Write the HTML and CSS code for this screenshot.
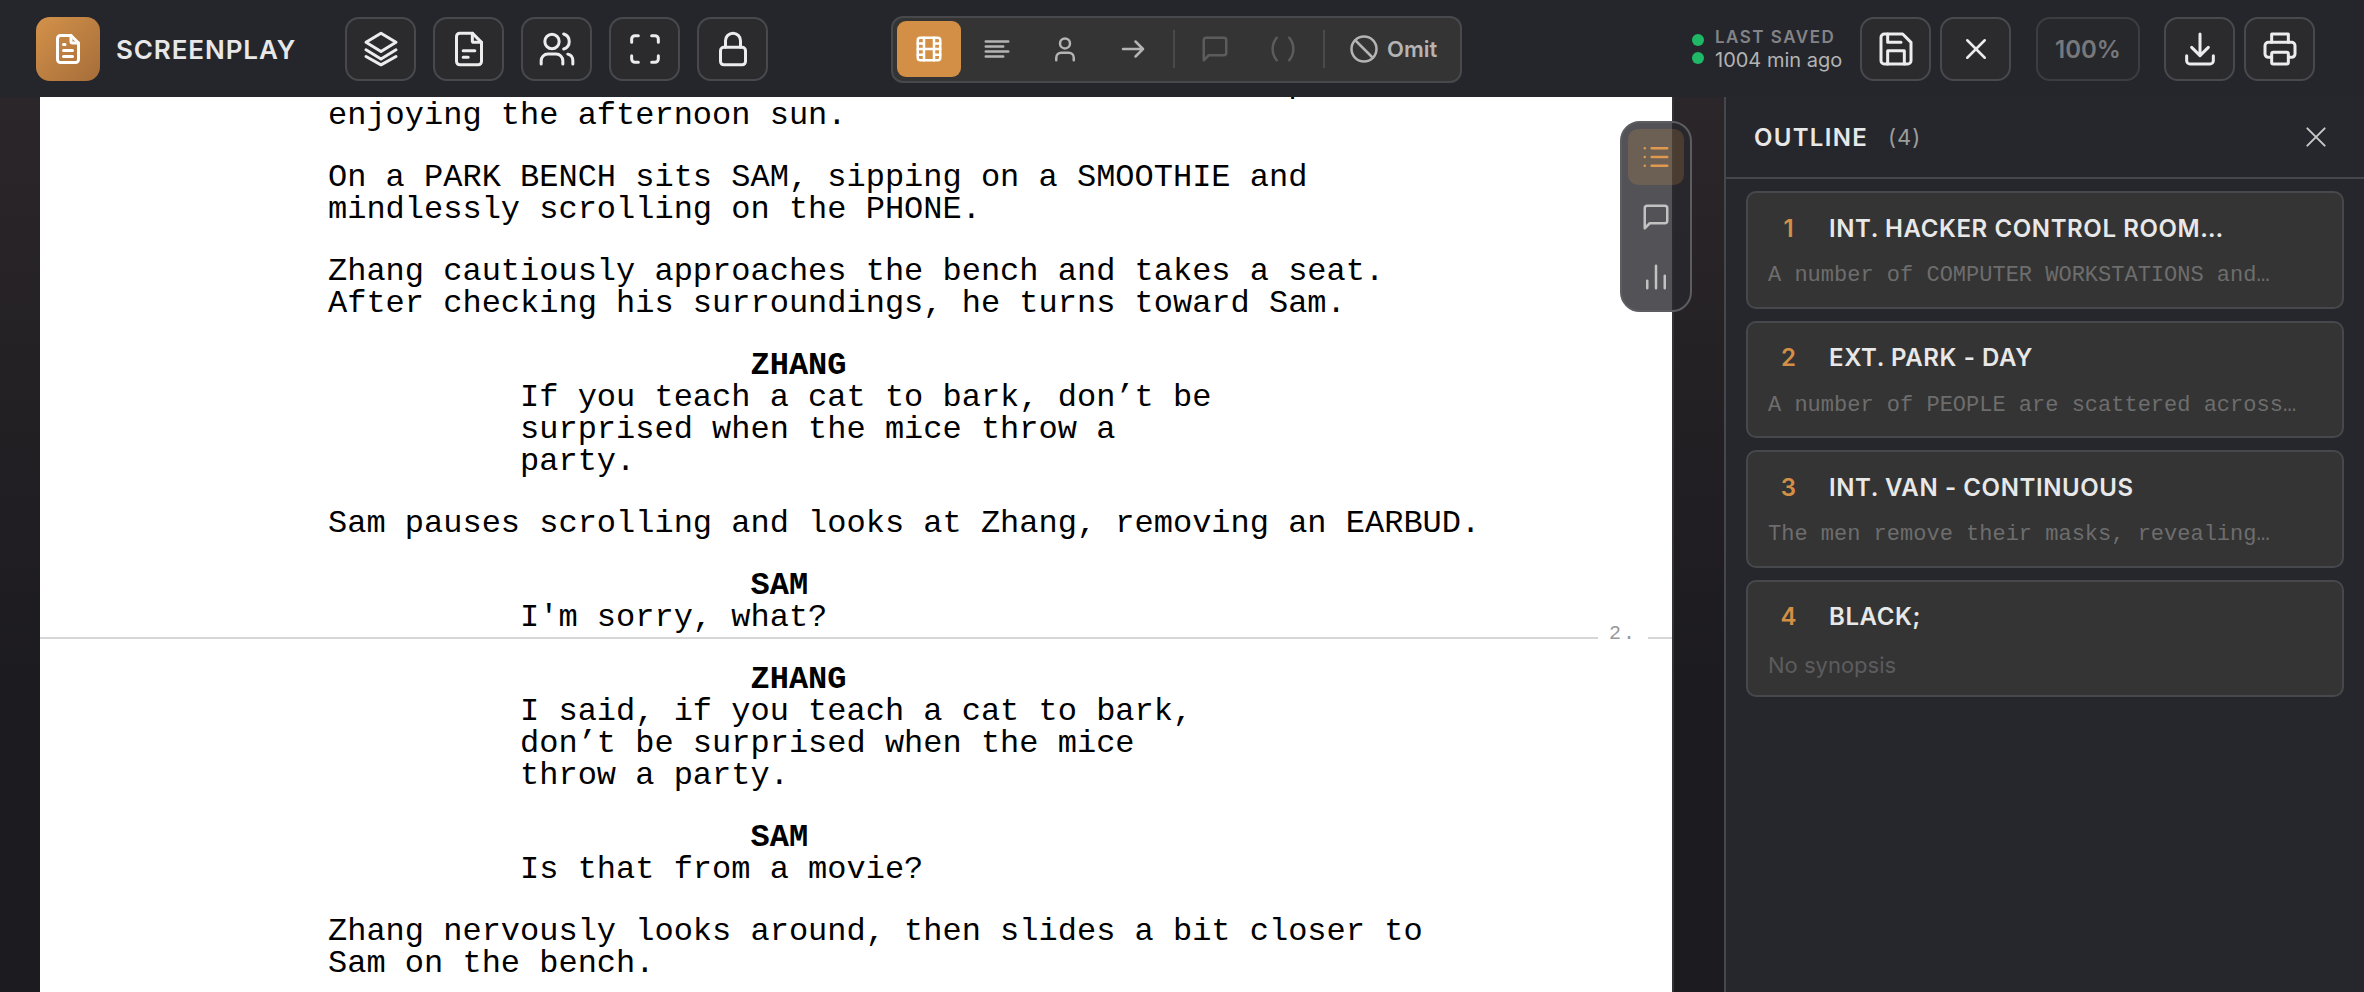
FILE: index.html
```html
<!DOCTYPE html>
<html lang="en">
<head>
<meta charset="utf-8">
<title>Screenplay</title>
<link rel="stylesheet" href="styles.css">
</head>
<body>
<div class="app">
  <header class="topbar">
    <div class="brand">
      <div class="logo"><svg class="ic32" viewBox="0 0 24 24"><path d="M14 3v4a1 1 0 0 0 1 1h4"/><path d="M17 21H7a2 2 0 0 1-2-2V5a2 2 0 0 1 2-2h7l5 5v11a2 2 0 0 1-2 2z"/><path d="M9 9h1M9 13h6M9 17h6"/></svg></div>
      <span class="brand-name">SCREENPLAY</span>
    </div>
    <div class="tools">
      <button class="btn"><svg class="ic36" viewBox="0 0 24 24"><path d="M12 2.500 3 8l9 5.500L21 8l-9-5.500z"/><path d="m3 12.500 9 5.500 9-5.500"/><path d="m3 16.500 9 5 9-5"/></svg></button>
      <button class="btn"><svg class="ic36" viewBox="0 0 24 24"><path d="M14 2.500v4.500a1 1 0 0 0 1 1h4.500"/><path d="M17.500 21.500h-11a2 2 0 0 1-2-2v-15a2 2 0 0 1 2-2H14L19.500 8v11.500a2 2 0 0 1-2 2z"/><path d="M8.500 13h7M8.500 17h3"/></svg></button>
      <button class="btn"><svg class="ic36" viewBox="0 0 24 24"><circle cx="9" cy="7.500" r="4.300"/><path d="M2.500 21v-2a4 4 0 0 1 4-4h5a4 4 0 0 1 4 4v2"/><path d="M16 3a4.700 4.700 0 0 1 0 9"/><path d="M21.500 21v-2a4 4 0 0 0-3-3.900"/></svg></button>
      <button class="btn"><svg class="ic36" viewBox="0 0 24 24"><path d="M4 8V6a2 2 0 0 1 2-2h2M4 16v2a2 2 0 0 0 2 2h2M16 4h2a2 2 0 0 1 2 2v2M16 20h2a2 2 0 0 0 2-2v-2"/></svg></button>
      <button class="btn"><svg class="ic36" viewBox="0 0 24 24"><rect x="4.500" y="11" width="15" height="10.500" rx="2"/><path d="M7.500 11V7a4.500 4.500 0 0 1 9 0v4"/></svg></button>
    </div>
    <div class="format">
      <button class="fbtn active"><svg class="ic30" viewBox="0 0 24 24"><rect x="3" y="3" width="18" height="18" rx="2"/><path d="M8 3v18M16 3v18M3 12h18M3 7.500h5M3 16.500h5M16 7.500h5M16 16.500h5"/></svg></button>
      <button class="fbtn"><svg class="ic30" viewBox="0 0 24 24"><path d="M3 6h18M3 10h14M3 14h18M3 18h14"/></svg></button>
      <button class="fbtn"><svg class="ic30" viewBox="0 0 24 24"><circle cx="12" cy="7.500" r="4"/><path d="M5 21v-2a4 4 0 0 1 4-4h6a4 4 0 0 1 4 4v2"/></svg></button>
      <button class="fbtn"><svg class="ic30" viewBox="0 0 24 24"><path d="M4 12h16M14 6l6 6-6 6"/></svg></button>
      <span class="sep"></span>
      <button class="fbtn off"><svg class="ic30" viewBox="0 0 24 24"><path d="M21 15a2 2 0 0 1-2 2H7l-4 4V5a2 2 0 0 1 2-2h14a2 2 0 0 1 2 2z"/></svg></button>
      <button class="fbtn off"><svg class="ic30" viewBox="0 0 24 24"><path d="M7 3a14 14 0 0 0 0 18M17 3a14 14 0 0 1 0 18"/></svg></button>
      <span class="sep"></span>
      <button class="fbtn omit"><svg class="ic30" viewBox="0 0 24 24"><circle cx="12" cy="12" r="10"/><path d="m5 5 14 14"/></svg><span>Omit</span></button>
    </div>
    <div class="status">
      <div class="dots"><i></i><i></i></div>
      <div class="saved"><span class="saved-label">LAST SAVED</span><span class="saved-time">1004 min ago</span></div>
    </div>
    <div class="pair">
      <button class="btn"><svg class="ic36" viewBox="0 0 24 24"><path d="M6 3h10l5 5v11a2 2 0 0 1-2 2H5a2 2 0 0 1-2-2V5a2 2 0 0 1 2-2z"/><path d="M7 21v-8h10v8M7 3v5h8"/></svg></button>
      <button class="btn"><svg class="ic30" viewBox="0 0 24 24"><path d="M5 5l14 14M19 5 5 19"/></svg></button>
    </div>
    <button class="btn zoom">100%</button>
    <div class="pair">
      <button class="btn"><svg class="ic36" viewBox="0 0 24 24"><path d="M4 16v3a2 2 0 0 0 2 2h12a2 2 0 0 0 2-2v-3"/><path d="m7 11 5 5 5-5M12 3v13"/></svg></button>
      <button class="btn"><svg class="ic36" viewBox="0 0 24 24"><path d="M7 8V3h10v5"/><path d="M7 17H5a2 2 0 0 1-2-2v-5a2 2 0 0 1 2-2h14a2 2 0 0 1 2 2v5a2 2 0 0 1-2 2h-2"/><rect x="7" y="14" width="10" height="7" rx="1"/></svg></button>
    </div>
  </header>
  <div class="main">
    <section class="workspace">
      <article class="page">
        <p class="action">A number of PEOPLE are scattered across the local park<br>enjoying the afternoon sun.</p>
        <p class="action">On a PARK BENCH sits SAM, sipping on a SMOOTHIE and<br>mindlessly scrolling on the PHONE.</p>
        <p class="action">Zhang cautiously approaches the bench and takes a seat.<br>After checking his surroundings, he turns toward Sam.</p>
        <p class="cue">ZHANG</p>
        <p class="dialog">If you teach a cat to bark, don’t be<br>surprised when the mice throw a<br>party.</p>
        <p class="action">Sam pauses scrolling and looks at Zhang, removing an EARBUD.</p>
        <p class="cue">SAM</p>
        <p class="dialog tight">I'm sorry, what?</p>
        <div class="break"><span class="rule"></span><span class="pnum">2.</span><span class="rule end"></span></div>
        <p class="cue">ZHANG</p>
        <p class="dialog">I said, if you teach a cat to bark,<br>don’t be surprised when the mice<br>throw a party.</p>
        <p class="cue">SAM</p>
        <p class="dialog">Is that from a movie?</p>
        <p class="action">Zhang nervously looks around, then slides a bit closer to<br>Sam on the bench.</p>
      </article>
      <nav class="sidetools">
        <button class="sbtn on"><svg class="ic30" viewBox="0 0 24 24"><path d="M8.500 5H21M8.500 12H21M8.500 19H21"/><path d="M3 5h.01M3 12h.01M3 19h.01"/></svg></button>
        <button class="sbtn"><svg class="ic30" viewBox="0 0 24 24"><path d="M21 15a2 2 0 0 1-2 2H7l-4 4V5a2 2 0 0 1 2-2h14a2 2 0 0 1 2 2z"/></svg></button>
        <button class="sbtn"><svg class="ic30" viewBox="0 0 24 24"><path d="M5 21v-6M12 21V3M19 21V11"/></svg></button>
      </nav>
    </section>
    <aside class="outline">
      <div class="outline-head">
        <h2>OUTLINE</h2><span class="count">(4)</span>
        <svg class="ic26 close" viewBox="0 0 24 24"><path d="M4 4l16 16M20 4 4 20"/></svg>
      </div>
      <div class="cards">
        <div class="card"><div class="card-top"><span class="num">1</span><span class="scene">INT. HACKER CONTROL ROOM…</span></div><p class="syn">A number of COMPUTER WORKSTATIONS and…</p></div>
        <div class="card"><div class="card-top"><span class="num">2</span><span class="scene">EXT. PARK - DAY</span></div><p class="syn">A number of PEOPLE are scattered across…</p></div>
        <div class="card"><div class="card-top"><span class="num">3</span><span class="scene">INT. VAN - CONTINUOUS</span></div><p class="syn">The men remove their masks, revealing…</p></div>
        <div class="card"><div class="card-top"><span class="num">4</span><span class="scene">BLACK;</span></div><p class="syn none">No synopsis</p></div>
      </div>
    </aside>
  </div>
</div>
</body>
</html>
```

FILE: styles.css
```css
* { box-sizing: border-box; }
html, body { margin: 0; height: 100%; background: #25262b; overflow: hidden; }
body { font-family: Inter, "Liberation Sans", sans-serif; }
p, h2 { margin: 0; }
button { font: inherit; padding: 0; cursor: pointer; }
svg { fill: none; stroke: currentColor; stroke-width: 2; stroke-linecap: round; stroke-linejoin: round; flex: none; display: block; }
.ic26 { width: 26px; height: 26px; }
.ic30 { width: 30px; height: 30px; }
.ic32 { width: 36px; height: 36px; }
.ic36 { width: 40px; height: 40px; stroke-width: 1.8; }

.app { display: flex; flex-direction: column; height: 992px; overflow: hidden; }

.topbar { height: 97px; flex: none; display: flex; align-items: center; padding: 1px 0 0 36px; background: #25262b; position: relative; z-index: 3; }
.brand { display: flex; align-items: center; gap: 16px; width: 309px; }
.logo { width: 64px; height: 64px; border-radius: 14px; background: linear-gradient(135deg, #d4924a, #a56d39); color: #fff; display: flex; align-items: center; justify-content: center; }
.brand-name { font-size: 26px; font-weight: 600; letter-spacing: 0.9px; color: #e8e8e8; }
.tools { display: flex; gap: 17px; width: 546px; }
.btn { width: 71px; height: 64px; border: 2px solid #48494d; border-radius: 14px; background: #2b2b2e; color: #ececec; display: flex; align-items: center; justify-content: center; }
.format { width: 571px; height: 67px; border: 2px solid #48494d; border-radius: 12px; background: #343434; display: flex; align-items: center; padding: 0 4px; gap: 4px; color: #b4b4b4; }
.fbtn { width: 64px; height: 56px; border: 0; border-radius: 9px; background: transparent; color: #b4b4b4; display: flex; align-items: center; justify-content: center; }
.fbtn.active { background: #d38f45; color: #fff; }
.fbtn.off { color: #5c5c5c; }
.fbtn.omit { width: auto; gap: 8px; padding: 0 5px 0 16px; font-size: 22px; font-weight: 600; }
.sep { width: 2px; height: 38px; background: #4a4a4c; margin: 0 4px; }

.status { display: flex; align-items: center; gap: 11px; margin-left: 230px; width: 168px; }
.dots { display: flex; flex-direction: column; gap: 6px; }
.dots i { display: block; width: 12px; height: 12px; border-radius: 50%; background: #1fb866; }
.saved { display: flex; flex-direction: column; }
.saved-label { font-size: 17px; line-height: 22px; font-weight: 600; letter-spacing: 1.5px; color: #838387; }
.saved-time { font-size: 20px; line-height: 24px; color: #b3b3b3; white-space: nowrap; }
.pair { display: flex; gap: 9px; }
.zoom { width: 104px; margin: 0 24px 0 25px; border-color: #3c3d41; background: #27282c; color: #77787c; font-size: 24px; font-weight: 600; }

.main { flex: 1; display: flex; min-height: 0; }
.workspace { width: 1724px; flex: none; position: relative; overflow: hidden; padding-left: 40px; background: linear-gradient(180deg, #2b2629 0, #1c1b20 65%); }
.page { width: 1634px; min-height: 1200px; margin-top: -29.5px; background: #fff; border-right: 2px solid #333; padding-left: 288px; color: #000; font-family: "Liberation Mono", "Courier New", monospace; font-size: 32px; line-height: 32px; }
.page p { white-space: nowrap; }
.action { margin-bottom: 30px; }
.cue { font-weight: 700; margin-left: 22ch; }
.dialog { margin-left: 10ch; margin-bottom: 30px; }
.dialog.tight { margin-bottom: 0; }
.break { display: flex; align-items: flex-start; height: 30px; margin-left: -288px; }
.rule { flex: 1; height: 2px; margin-top: 3px; background: #d6d6d6; }
.rule.end { flex: none; width: 24px; }
.pnum { width: 50px; text-align: center; margin-top: -14px; font-size: 20px; line-height: 28px; color: #999; letter-spacing: 2px; }

.sidetools { position: absolute; left: 1620px; top: 24px; width: 72px; height: 191px; border: 2px solid #5c5c61; border-radius: 20px; background: rgba(40, 40, 45, 0.8); display: flex; flex-direction: column; align-items: center; padding-top: 6px; gap: 4px; }
.sbtn { width: 56px; height: 56px; border: 0; border-radius: 10px; background: transparent; color: #c2c2c2; display: flex; align-items: center; justify-content: center; }
.sbtn.on { background: rgba(211, 143, 69, 0.2); color: #e0994f; }

.outline { flex: 1; border-left: 2px solid #46474c; background: #26272c; }
.outline-head { height: 82px; border-bottom: 2px solid #46474c; display: flex; align-items: center; padding: 0 35px 0 28px; color: #e8e8e8; }
.outline-head h2 { font-size: 24px; font-weight: 600; letter-spacing: 1.3px; }
.count { font-size: 22px; color: #9c9c9c; margin-left: 20px; letter-spacing: 1px; }
.close { margin-left: auto; color: #c8c8c8; stroke-width: 1.8; }
.cards { display: flex; flex-direction: column; gap: 12px; padding: 12px 20px 0 20px; }
.card { height: 117.5px; border: 2px solid #47484c; border-radius: 10px; background: #343434; padding: 0 20px; }
.card-top { height: 70px; display: flex; align-items: center; }
.num { width: 41px; margin-right: 20px; text-align: center; font-size: 24px; font-weight: 600; color: #d38f45; }
.scene { font-size: 24px; font-weight: 600; letter-spacing: 0.6px; color: #e8e8e8; white-space: nowrap; }
.syn { font-family: "Liberation Mono", monospace; font-size: 22px; line-height: 26px; color: #6d6d6d; white-space: nowrap; }
.syn.none { font-family: Inter, sans-serif; font-size: 22px; color: #5c5c5e; }
```
